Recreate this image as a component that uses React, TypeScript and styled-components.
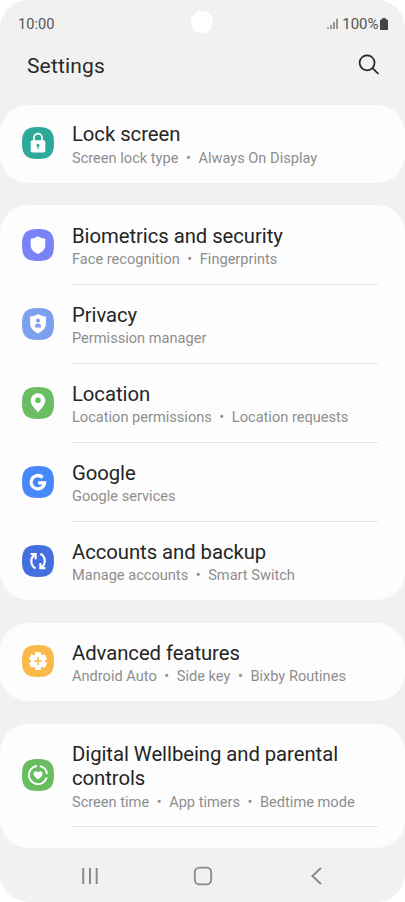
import React from 'react';
import styled, { createGlobalStyle } from 'styled-components';

const GlobalStyle = createGlobalStyle`
  * { box-sizing: border-box; }
  body { margin: 0; background: #fff; font-family: Roboto, sans-serif; }
`;

const Screen = styled.div`
  width: 405px;
  height: 902px;
  display: flex;
  flex-direction: column;
  background: #f1f1f1;
  border-radius: 28px;
  overflow: hidden;
`;

const StatusBar = styled.div`
  height: 46px;
  display: grid;
  grid-template-columns: 1fr 22px 1fr;
  align-items: center;
  padding: 2px 17px 0 17px;
  font-size: 14.6px;
  color: #555;
`;

const Clock = styled.span`
  padding-left: 1px;
`;

const Camera = styled.div`
  width: 22px;
  height: 22px;
  margin: -4px 0 0 -0.5px;
  border-radius: 50%;
  background: #fff;
`;

const StatusIcons = styled.div`
  display: flex;
  align-items: center;
  justify-content: flex-end;
  svg { display: block; }
`;

const Percent = styled.span`
  margin: 0 1.5px 0 4px;
  font-size: 15px;
`;

const Header = styled.header`
  height: 59px;
  display: flex;
  align-items: flex-start;
  justify-content: space-between;
  padding: 7px 25px 0 27px;
`;

const Heading = styled.h1`
  margin: 0;
  font-size: 21px;
  font-weight: 400;
  line-height: 26px;
  letter-spacing: 0.15px;
  color: #2a2a2a;
`;

const List = styled.main`
  display: flex;
  flex-direction: column;
  gap: 22.5px;
`;

const Card = styled.section`
  background: #fdfdfd;
  border-radius: 28px;
`;

const LastCard = styled(Card)`
  padding-bottom: 21px;
`;

const Row = styled.div<{ $height: number }>`
  height: ${(p) => p.$height}px;
  display: flex;
  padding: 0 27px 0 22.3px;
`;

const IconCell = styled.div`
  width: 49.7px;
  display: flex;
  align-items: center;
  flex: none;
  padding-bottom: 1px;
`;

const Content = styled.div<{ $divider: boolean; $top: number }>`
  flex: 1;
  padding-top: ${(p) => p.$top}px;
  border-bottom: 1px solid ${(p) => (p.$divider ? '#e5e5e5' : 'transparent')};
`;

const Title = styled.div`
  font-size: 20.3px;
  line-height: 23.5px;
  letter-spacing: -0.05px;
  color: #252525;
`;

const Subtitle = styled.div<{ $gap: number }>`
  display: flex;
  margin-top: ${(p) => p.$gap}px;
  font-size: 14.6px;
  line-height: 18px;
  color: #8e8e8e;
  white-space: nowrap;
`;

const Dot = styled.span`
  width: 20px;
  text-align: center;
`;

const NavBar = styled.nav`
  flex: 1;
  display: flex;
  align-items: center;
  justify-content: space-between;
  padding: 2px 76px 0;
`;

const tiles = {
  lock: '#2da99a',
  security: '#7983f7',
  privacy: '#7ba0ee',
  location: '#6abd62',
  google: '#4789f8',
  accounts: '#4470df',
  advanced: '#f9b94b',
  wellbeing: '#68bd60',
};

type IconName = keyof typeof tiles;

const glyphs: Record<IconName, React.ReactNode> = {
  lock: (
    <>
      <path d="M12 14v-3.4a4 4 0 0 1 8 0V14" fill="none" stroke="#fff" strokeWidth="1.7" />
      <rect x="8.7" y="13.3" width="14.6" height="12.2" rx="1.8" fill="#fff" />
      <circle cx="16" cy="18.3" r="1.5" fill={tiles.lock} />
      <path d="M16 18.5v3.4" stroke={tiles.lock} strokeWidth="1.2" />
    </>
  ),
  security: (
    <path d="M16 7.2c2.5 1.5 4.8 2.2 7.3 2.5v6.8c0 3.7-3 6.5-7.3 8.5-4.3-2-7.3-4.8-7.3-8.5V9.7c2.5-.3 4.8-1 7.3-2.5z" fill="#fff" />
  ),
  privacy: (
    <>
      <path d="M16 5.9c2.6 1.6 5.1 2.3 7.9 2.6v7.6c0 4-3.3 7-7.9 9.3-4.6-2.3-7.9-5.3-7.9-9.3V8.5c2.8-.3 5.3-1 7.9-2.6z" fill="#fff" />
      <circle cx="16" cy="12.4" r="2" fill={tiles.privacy} />
      <path d="M12.9 18.4c0-1.8 1.2-2.9 3.1-2.9s3.1 1.1 3.1 2.9c0 .9-.5 1.2-1.2 1.2h-3.8c-.7 0-1.2-.3-1.2-1.2z" fill={tiles.privacy} />
    </>
  ),
  location: (
    <>
      <path d="M16 6.3a7.3 7.3 0 0 0-7.3 7.3c0 4.8 4.8 8.7 7.3 11.8 2.5-3.1 7.3-7 7.3-11.8A7.3 7.3 0 0 0 16 6.3z" fill="#fff" />
      <circle cx="16" cy="13.2" r="2.8" fill={tiles.location} />
    </>
  ),
  google: (
    <path d="M20.6 11.5A6.7 6.7 0 1 0 22.5 16.9H16.2" fill="none" stroke="#fff" strokeWidth="3.3" />
  ),
  accounts: (
    <g fill="none" stroke="#fff" strokeWidth="2.2">
      <path d="M13.6 23.4A8.1 8.1 0 0 1 12.4 9.9" />
      <path d="M8.6 9h5v5.2" />
      <path d="M18.4 8.7a8.1 8.1 0 0 1 1.2 13.6" />
      <path d="M18.4 18v5.2h5" />
    </g>
  ),
  advanced: (
    <>
      <g fill="#fff">
        <circle cx="16" cy="16" r="7.1" />
        {[0, 60, 120].map((angle) => (
          <rect key={angle} x="13.1" y="6.9" width="5.8" height="18.2" rx="1.2" transform={`rotate(${angle} 16 16)`} />
        ))}
      </g>
      <path d="M16 12v8M12 16h8" stroke={tiles.advanced} strokeWidth="1.5" />
    </>
  ),
  wellbeing: (
    <>
      <g fill="none" stroke="#fff" strokeWidth="1.9">
        <path d="M17.8 7.1a9.1 9.1 0 0 1 7.2 7.9" />
        <path d="M14.9 7a9.1 9.1 0 1 0 9.8 11.6" />
      </g>
      <path d="M16 20.6c-2.6-2.1-4.5-3.5-4.5-5.8 0-2.7 3-3.4 4.5-1.3 1.5-2.1 4.5-1.4 4.5 1.3 0 2.3-1.9 3.7-4.5 5.8z" fill="#fff" />
    </>
  ),
};

const TileIcon = ({ name }: { name: IconName }) => (
  <svg width="32" height="32" viewBox="0 0 32 32">
    <path d="M16 0C28 0 32 4 32 16S28 32 16 32 0 28 0 16 4 0 16 0z" fill={tiles[name]} />
    {glyphs[name]}
  </svg>
);

interface Item {
  icon: IconName;
  title: string;
  details: string[];
  height: number;
  top?: number;
  gap?: number;
  divider?: boolean;
}

const groups: Item[][] = [
  [{ icon: 'lock', title: 'Lock screen', details: ['Screen lock type', 'Always On Display'], height: 77.5, top: 18, gap: 2.5 }],
  [
    { icon: 'security', title: 'Biometrics and security', details: ['Face recognition', 'Fingerprints'], height: 80, top: 20, divider: true },
    { icon: 'privacy', title: 'Privacy', details: ['Permission manager'], height: 79, divider: true },
    { icon: 'location', title: 'Location', details: ['Location permissions', 'Location requests'], height: 79, divider: true },
    { icon: 'google', title: 'Google', details: ['Google services'], height: 79, divider: true },
    { icon: 'accounts', title: 'Accounts and backup', details: ['Manage accounts', 'Smart Switch'], height: 78 },
  ],
  [{ icon: 'advanced', title: 'Advanced features', details: ['Android Auto', 'Side key', 'Bixby Routines'], height: 78.5 }],
  [
    {
      icon: 'wellbeing',
      title: 'Digital Wellbeing and parental controls',
      details: ['Screen time', 'App timers', 'Bedtime mode'],
      height: 103,
      top: 19.5,
      gap: 2.8,
      divider: true,
    },
  ],
];

const SettingsRow = ({ item }: { item: Item }) => (
  <Row $height={item.height}>
    <IconCell>
      <TileIcon name={item.icon} />
    </IconCell>
    <Content $divider={!!item.divider} $top={item.top ?? 19}>
      <Title>{item.title}</Title>
      <Subtitle $gap={item.gap ?? 1.5}>
        {item.details.map((detail, i) => (
          <React.Fragment key={detail}>
            {i > 0 && <Dot>•</Dot>}
            <span>{detail}</span>
          </React.Fragment>
        ))}
      </Subtitle>
    </Content>
  </Row>
);

export default function App() {
  return (
    <>
      <GlobalStyle />
      <Screen>
        <StatusBar>
          <Clock>10:00</Clock>
          <Camera />
          <StatusIcons>
            <svg width="11" height="12" viewBox="0 0 11 12">
              <path d="M1 9.5V11M4 7v4M7 4v7M10 .8V11" stroke="#666" strokeWidth="1.3" />
            </svg>
            <Percent>100%</Percent>
            <svg width="8" height="12" viewBox="0 0 8 12">
              <path d="M2.3 0h3.4v1.4H7.2c.5 0 .8.3.8.8v9c0 .5-.3.8-.8.8H.8c-.5 0-.8-.3-.8-.8v-9c0-.5.3-.8.8-.8h1.5z" fill="#444" />
            </svg>
          </StatusIcons>
        </StatusBar>
        <Header>
          <Heading>Settings</Heading>
          <svg width="22" height="22" viewBox="0 0 22 22" fill="none" stroke="#252525" strokeWidth="1.7">
            <circle cx="9.1" cy="9.8" r="7.5" />
            <path d="M14.4 15.1l6 5.8" />
          </svg>
        </Header>
        <List>
          {groups.map((items, i) => {
            const Group = i === groups.length - 1 ? LastCard : Card;
            return (
              <Group key={items[0].title}>
                {items.map((item) => (
                  <SettingsRow key={item.title} item={item} />
                ))}
              </Group>
            );
          })}
        </List>
        <NavBar>
          <svg width="28" height="20" viewBox="0 0 28 20">
            <path d="M7.2 2v16M14 2v16M20.7 2v16" stroke="#8b8b8b" strokeWidth="2" />
          </svg>
          <svg width="20" height="20" viewBox="0 0 20 20">
            <rect x="1.8" y="1.6" width="16.4" height="16.8" rx="4.7" fill="none" stroke="#8b8b8b" strokeWidth="1.9" />
          </svg>
          <svg width="28" height="20" viewBox="0 0 28 20">
            <path d="M20 2l-8.6 8 8.6 8" fill="none" stroke="#8b8b8b" strokeWidth="2" />
          </svg>
        </NavBar>
      </Screen>
    </>
  );
}
